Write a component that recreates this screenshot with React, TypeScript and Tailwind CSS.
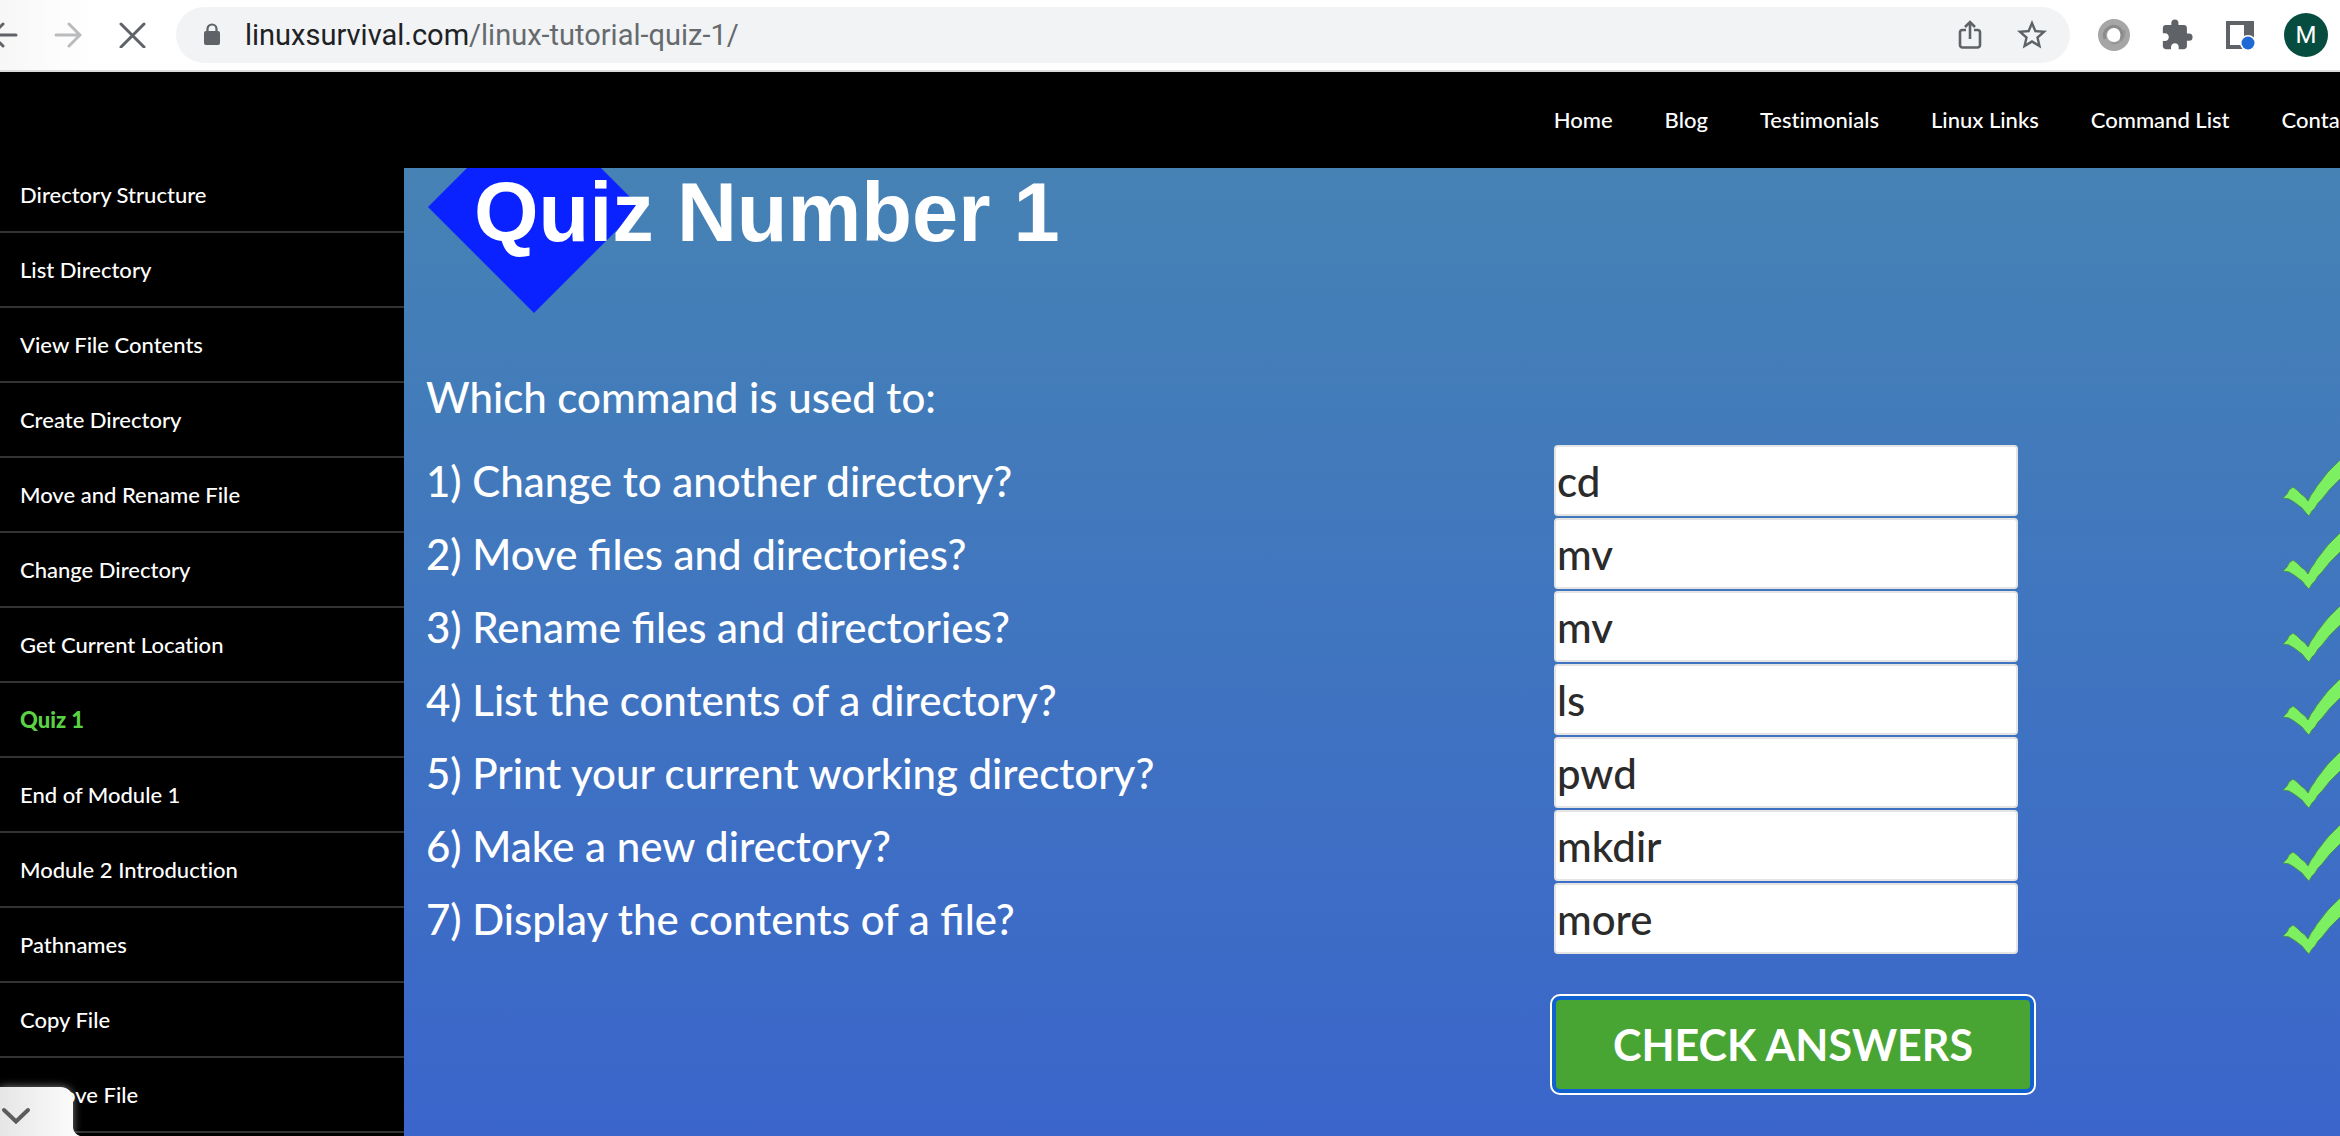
import React from "react";
import { MdExtension, MdStarBorder } from "react-icons/md";

const navLinks = ["Home", "Blog", "Testimonials", "Linux Links", "Command List", "Contact"];

const lessons = [
  "Directory Structure",
  "List Directory",
  "View File Contents",
  "Create Directory",
  "Move and Rename File",
  "Change Directory",
  "Get Current Location",
  "Quiz 1",
  "End of Module 1",
  "Module 2 Introduction",
  "Pathnames",
  "Copy File",
  "Remove File",
];

const questions = [
  { text: "1) Change to another directory?", answer: "cd" },
  { text: "2) Move files and directories?", answer: "mv" },
  { text: "3) Rename files and directories?", answer: "mv" },
  { text: "4) List the contents of a directory?", answer: "ls" },
  { text: "5) Print your current working directory?", answer: "pwd" },
  { text: "6) Make a new directory?", answer: "mkdir" },
  { text: "7) Display the contents of a file?", answer: "more" },
];

function ArrowIcon({ back = false }: { back?: boolean }) {
  return (
    <svg width="28" height="26" viewBox="0 0 28 26" fill="none" stroke="currentColor" strokeWidth="3" strokeLinecap="round">
      {back ? <path d="M26 13H2.500M13 2L2 13L13 24" /> : <path d="M2 13H25.500M15 2L26 13L15 24" />}
    </svg>
  );
}

function CheckMark() {
  return (
    <svg width="88" height="71" viewBox="0 0 88 71" className="block shrink-0" role="img" aria-label="Correct">
      <path
        d="M0 53L4 49L6 45L10 42L14 45L18 49L22 52L25 56L28 50L31 46L34 41L38 36L41 32L45 27L49 23L53 19L57 15L62 10L68 5L76 0L86 2L80 9L74 16L68 22L62 29L57 34L52 39L47 44L43 49L39 54L35 58L32 63L29 66L26 71L23 68L19 63L15 60L11 57L6 54Z"
        fill="#7cf060"
        stroke="#4d8f58"
        strokeWidth="1"
      />
    </svg>
  );
}

function BrowserBar() {
  return (
    <header className="flex h-18 shrink-0 items-center overflow-hidden border-b-2 border-[#d9dbdd] bg-linear-to-r from-[#f7f7f7] to-white to-4% pr-3 text-[#5f6368]">
      <button type="button" aria-label="Back" className="-ml-2.5 shrink-0"><ArrowIcon back /></button>
      <button type="button" aria-label="Forward" className="ml-9 shrink-0 text-[#b9bbbd]"><ArrowIcon /></button>
      <button type="button" aria-label="Stop loading" className="ml-9 shrink-0">
        <svg width="28" height="26" viewBox="0 0 28 26" fill="none" stroke="currentColor" strokeWidth="3" strokeLinecap="round">
          <path d="M3 2L26 25M26 2L3 25" />
        </svg>
      </button>
      <div className="ml-[30px] flex h-14 min-w-0 flex-1 items-center rounded-full bg-[#f1f3f4] pl-[27px] pr-5">
        <svg width="18" height="24" viewBox="0 0 18 24" className="shrink-0">
          <rect x="1" y="8" width="16" height="14" rx="2" fill="currentColor" />
          <path d="M4.500 9V6a4.500 4.500 0 0 1 9 0V9" fill="none" stroke="currentColor" strokeWidth="2.200" />
        </svg>
        <p className="ml-6 flex-1 truncate font-[Roboto,sans-serif] text-[29px] leading-9 text-[#666a6e]">
          <span className="text-[#202124]">linuxsurvival.com</span>/linux-tutorial-quiz-1/
        </p>
        <button type="button" aria-label="Share">
          <svg width="24" height="32" viewBox="0 0 24 32" fill="none" stroke="currentColor" strokeWidth="2.600">
            <path d="M8 11H4.500a2.500 2.500 0 0 0-2.500 2.500V26a2.500 2.500 0 0 0 2.500 2.500h15A2.500 2.500 0 0 0 22 26V13.500a2.500 2.500 0 0 0-2.500-2.500H16M12 20V3.500M7 8L12 3L17 8" />
          </svg>
        </button>
        <button type="button" aria-label="Bookmark" className="ml-8"><MdStarBorder size={36} /></button>
      </div>
      <button type="button" aria-label="Extension" className="ml-7 shrink-0">
        <svg width="32" height="32" viewBox="0 0 32 32" fill="none">
          <circle cx="16" cy="16" r="11.500" stroke="#a6a6a6" strokeWidth="9" />
          <path d="M7 20C4 11 13 5 20 8.500C24 10.500 25 17 23 21" stroke="#8b8b8b" strokeWidth="3" />
          <path d="M26 11C28 20 20 26 13 24" stroke="#949494" strokeWidth="2" />
        </svg>
      </button>
      <button type="button" aria-label="Extensions menu" className="ml-[30px] shrink-0"><MdExtension size={34} /></button>
      <button type="button" aria-label="Side panel" className="ml-[30px] shrink-0">
        <svg width="32" height="32" viewBox="0 0 32 32">
          <path d="M2 2H30V30H2ZM6 6V26H20V6Z" fill="currentColor" fillRule="evenodd" />
          <circle cx="24" cy="24" r="8" fill="#fff" />
          <circle cx="24" cy="24" r="6.500" fill="#1f69d6" />
        </svg>
      </button>
      <button type="button" aria-label="Profile" className="ml-7 size-11 shrink-0 rounded-full bg-[#074d3f] font-[Roboto,sans-serif] text-[24px] text-white">
        M
      </button>
    </header>
  );
}

function Sidebar() {
  return (
    <aside className="w-[404px] shrink-0 overflow-hidden bg-black [font-variant-ligatures:none]">
      <ul className="-mt-2.5">
        {lessons.map((name) => (
          <li key={name} className="border-b-2 border-[#333333]">
            <a
              href="#"
              className={
                name === "Quiz 1"
                  ? "block px-5 py-5 text-[22px] leading-[33px] font-black text-[#5bd244]"
                  : "block px-5 py-5 text-[22px] leading-[33px] font-medium text-white"
              }
            >
              {name}
            </a>
          </li>
        ))}
      </ul>
    </aside>
  );
}

function Quiz() {
  return (
    <main className="min-w-0 flex-1 overflow-hidden bg-linear-to-b from-[#4682b4] to-[#3b65cb] pl-[22px] text-[42px] leading-[60px] font-medium text-white">
      <div className="relative -mt-[67px] pl-0.5">
        <svg width="212" height="212" viewBox="0 0 212 212" className="block">
          <path d="M106 0L212 106L106 212L0 106Z" fill="#0a22ff" />
        </svg>
        <h1 className="absolute inset-0 flex items-center pt-2.5 pl-12 font-['Liberation_Sans',sans-serif] text-[83px] leading-none font-bold whitespace-nowrap">
          Quiz Number 1
        </h1>
      </div>
      <form onSubmit={(e) => e.preventDefault()}>
        <p className="mt-[54px]">Which command is used to:</p>
        <div className="mt-[18px] flex flex-col gap-0.5">
          {questions.map((q, i) => (
            <div
              key={q.text}
              className="grid grid-cols-[minmax(0,1128fr)_minmax(0,729fr)_minmax(0,57fr)] items-center"
            >
              <label htmlFor={`answer-${i}`}>{q.text}</label>
              <input
                id={`answer-${i}`}
                type="text"
                defaultValue={q.answer}
                className="h-[71px] w-[464px] rounded-sm border-2 border-[#e4e4e4] bg-white px-px text-[#2b2b2b]"
              />
              <CheckMark />
            </div>
          ))}
        </div>
        <div className="mt-[46px] grid grid-cols-[1130fr_784fr]">
          <button
            type="submit"
            className="col-start-2 h-[89px] w-[474px] rounded-sm bg-[#48a533] text-[43px] font-bold ring-4 ring-[#0f62cf] outline-2 outline-offset-4 outline-white"
          >
            CHECK ANSWERS
          </button>
        </div>
      </form>
    </main>
  );
}

export default function App() {
  return (
    <div className="relative flex h-screen flex-col overflow-hidden bg-black font-[Lato,sans-serif]">
      <BrowserBar />
      <nav className="flex h-24 shrink-0 items-center gap-[52px] overflow-hidden bg-black pb-0.5 pl-[66.4%] text-[22px] font-medium whitespace-nowrap text-white [font-variant-ligatures:none]">
        {navLinks.map((name) => (
          <a key={name} href="#">{name}</a>
        ))}
      </nav>
      <div className="flex min-h-0 flex-1">
        <Sidebar />
        <Quiz />
      </div>
      <button
        type="button"
        aria-label="Show downloads"
        className="absolute bottom-0 left-0 h-[49px] w-[73px] rounded-tr-xl bg-linear-to-r from-[#e6e6e6] to-[#fbfbfb] shadow-[0_0_8px_rgba(255,255,255,0.5)]"
      >
        <svg width="32" height="20" viewBox="0 0 32 20" fill="none" stroke="#5c5c5c" strokeWidth="4" strokeLinecap="round" className="mt-2">
          <path d="M4 4L16 15.500L28 4" />
        </svg>
        <svg width="8" height="8" viewBox="0 0 8 8" className="absolute bottom-0 left-full">
          <path d="M0 0Q1 6 7 8H0Z" fill="#fbfbfb" />
        </svg>
      </button>
    </div>
  );
}
